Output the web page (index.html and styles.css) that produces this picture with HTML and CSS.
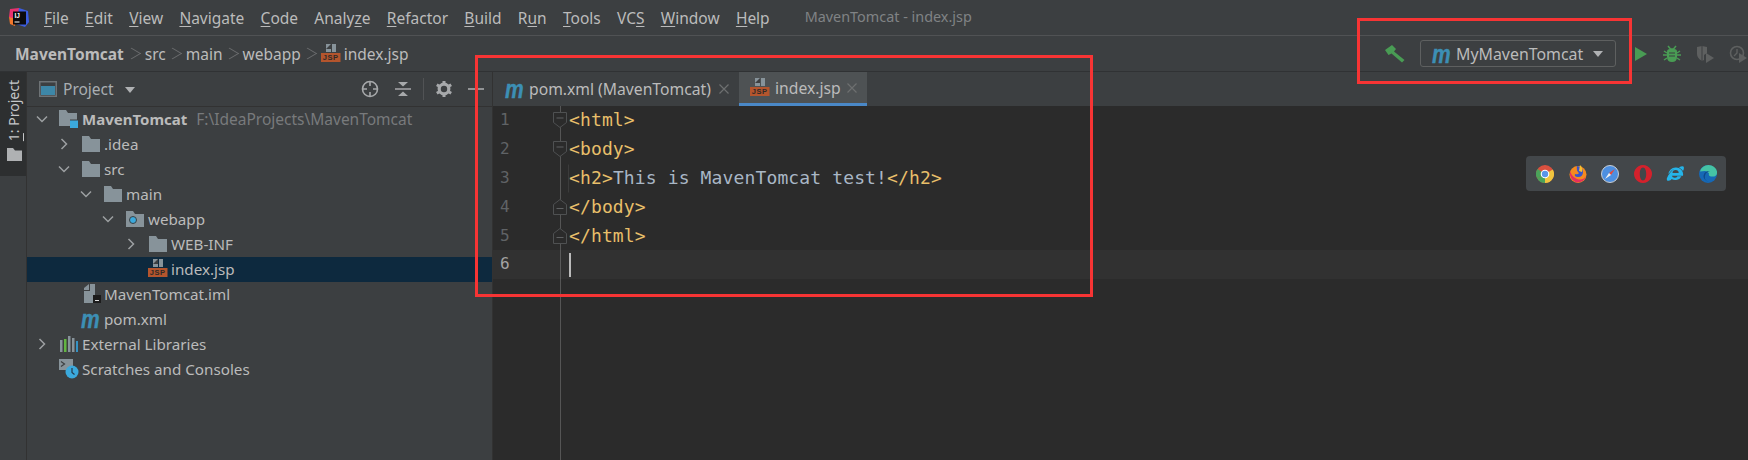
FILE: index.html
```html
<!DOCTYPE html>
<html lang="en">
<head>
<meta charset="utf-8">
<title>MavenTomcat - index.jsp</title>
<link rel="stylesheet" href="styles.css">
</head>
<body>
<svg class="defs" aria-hidden="true">
  <symbol id="folder" viewBox="0 0 20 18"><path d="M1 1h7l2 3h9v13H1z" fill="#87939a"/></symbol>
  <symbol id="chev-d" viewBox="0 0 16 16"><path d="M3 5.500l5 5 5-5" fill="none" stroke="#9da0a2" stroke-width="1.500"/></symbol>
  <symbol id="chev-r" viewBox="0 0 16 16"><path d="M5.500 3l5 5-5 5" fill="none" stroke="#9da0a2" stroke-width="1.500"/></symbol>
  <symbol id="jsp" viewBox="0 0 20 20">
    <path d="M5 0h5v8H5z M11 0h4v8h-4z" fill="#87939a"/><path d="M5 5l5-5v5z" fill="#3c3f41"/>
    <rect x="0" y="9" width="19.500" height="9" fill="#b4552d"/>
    <text x="9.700" y="16.300" text-anchor="middle" font-family="Liberation Sans, sans-serif" font-weight="700" font-size="7.500" letter-spacing=".6" fill="#2f2a28">JSP</text>
  </symbol>
  <symbol id="close" viewBox="0 0 12 12"><path d="M1.500 1.500l9 9m0-9l-9 9" stroke="#6d6f70" stroke-width="1.200" fill="none"/></symbol>
  <symbol id="minus-fold" viewBox="0 0 14 16"><path d="M.5.5h13v10l-6.500 5-6.500-5z" fill="#2b2b2b" stroke="#4f5152"/><path d="M3.500 6h7" stroke="#5f6163"/></symbol>
  <symbol id="end-fold" viewBox="0 0 14 16"><path d="M.5 15.500h13v-10l-6.500-5-6.500 5z" fill="#2b2b2b" stroke="#4f5152"/><path d="M3.500 9.500h7" stroke="#5f6163"/></symbol>
</svg>

<header class="titlebar">
  <svg class="logo" viewBox="0 0 20 20" aria-hidden="true">
    <path d="M1 1l9-1 2 4-9 8-3-3z" fill="#e8326f"/>
    <path d="M10 0l9 3 1 11-4 5-9-3z" fill="#3b5de0"/>
    <path d="M0 9l7 2-1 7-5-2z" fill="#f2772b"/>
    <rect x="4" y="3.500" width="13" height="13" fill="#0b0b0d"/>
    <text x="5.500" y="10" font-family="Liberation Sans, sans-serif" font-weight="700" font-size="6.500" fill="#fff">IJ</text>
    <rect x="5.500" y="13.500" width="5" height="1" fill="#fff"/>
  </svg>
  <nav class="menu">
    <span><u>F</u>ile</span><span><u>E</u>dit</span><span><u>V</u>iew</span><span><u>N</u>avigate</span><span><u>C</u>ode</span><span>Analy<u>z</u>e</span><span><u>R</u>efactor</span><span><u>B</u>uild</span><span>R<u>u</u>n</span><span><u>T</u>ools</span><span>VC<u>S</u></span><span><u>W</u>indow</span><span><u>H</u>elp</span>
  </nav>
  <span class="wintitle">MavenTomcat - index.jsp</span>
</header>

<div class="navbar">
  <div class="crumbs">
    <b>MavenTomcat</b><i class="sep"></i><span>src</span><i class="sep"></i><span>main</span><i class="sep"></i><span>webapp</span><i class="sep"></i>
    <svg class="ic jspcrumb"><use href="#jsp"/></svg><span>index.jsp</span>
  </div>
  <div class="runbar">
    <svg class="hammer" viewBox="0 0 20 18" aria-hidden="true"><path d="M0 5L7 0l4 4-2 2.500L19.500 15 17 17.500 6.500 8.500 3.500 10z" fill="#499c54"/></svg>
    <div class="runconfig"><span class="mvn">m</span><span class="runname">MyMavenTomcat</span><i class="caret"></i></div>
    <svg class="runic play" viewBox="0 0 14 16" aria-hidden="true"><path d="M1 1l12 7-12 7z" fill="#499c54"/></svg>
    <svg class="runic" viewBox="0 0 18 18" aria-hidden="true"><path d="M5 1l2.500 3h3L13 1M1 6l3 2M17 6l-3 2M0 10h4M14 10h4M1 15l3-2M17 15l-3-2" stroke="#499c54" stroke-width="1.500" fill="none"/><path d="M4 6.500Q4 4 7 4h4q3 0 3 2.500V12q0 5-5 5t-5-5z" fill="#499c54"/><path d="M6 8h6M6 11h6" stroke="#3c3f41" stroke-width="1.200"/></svg>
    <svg class="runic" viewBox="0 0 18 18" aria-hidden="true"><path d="M1 2l5-1 5 1v6l-3 2v5l-2 1q-5-3-5-7z" fill="#5e6060"/><path d="M6 1v15" stroke="#3c3f41"/><path d="M10 8l8 5-8 5z" fill="#5e6060"/></svg>
    <svg class="runic last" viewBox="0 0 18 18" aria-hidden="true"><circle cx="8" cy="8" r="6.500" fill="none" stroke="#5e6060" stroke-width="1.600"/><path d="M8 4v4l-3 3" stroke="#5e6060" stroke-width="1.400" fill="none"/><path d="M10 8l8 5-8 5z" fill="#5e6060"/></svg>
  </div>
</div>

<main class="main">
  <aside class="stripe">
    <div class="stripe-btn">
      <span class="stripe-label"><u>1</u>: Project</span>
      <svg class="stripe-folder" viewBox="0 0 15 13" aria-hidden="true"><path d="M0 0h6l2 2.500h7V13H0z" fill="#afb1b3"/></svg>
    </div>
  </aside>

  <section class="project">
    <div class="panel-head">
      <svg class="paneic" viewBox="0 0 18 16" aria-hidden="true"><rect x=".75" y=".75" width="16.500" height="14.500" fill="none" stroke="#6e7376" stroke-width="1.500"/><rect x="2" y="5" width="14" height="9" fill="#3d87a8"/></svg>
      <span class="panetitle">Project</span><i class="caret small"></i>
      <div class="pane-tools">
        <svg class="tool" viewBox="0 0 18 18" aria-hidden="true"><circle cx="9" cy="9" r="7.500" fill="none" stroke="#a7a9ab" stroke-width="1.600"/><path d="M9 1v5M9 12v5M1 9h5M12 9h5" stroke="#a7a9ab" stroke-width="1.600"/></svg>
        <svg class="tool" viewBox="0 0 18 18" aria-hidden="true"><path d="M1 9h16" stroke="#a7a9ab" stroke-width="1.500"/><path d="M4 2h10L9 6.500zM4 16h10L9 11.500z" fill="#a7a9ab"/></svg>
        <i class="toolsep"></i>
        <svg class="tool" viewBox="0 0 18 18" aria-hidden="true"><circle cx="9" cy="9" r="4.800" fill="none" stroke="#a7a9ab" stroke-width="3.200"/><path d="M9 1v3M9 14v3M1.800 4.800l2.600 1.500M13.600 11.700l2.600 1.500M1.800 13.200l2.600-1.500M13.600 6.300l2.600-1.500" stroke="#a7a9ab" stroke-width="3"/></svg>
        <svg class="tool" viewBox="0 0 18 18" aria-hidden="true"><path d="M1 9h16" stroke="#a7a9ab" stroke-width="1.600"/></svg>
      </div>
    </div>
    <div class="tree">
      <div class="row d0"><svg class="chev"><use href="#chev-d"/></svg>
        <svg class="ic" viewBox="0 0 20 18"><path d="M0 0h7l2 3h9v13H0z" fill="#87939a"/><rect x="11" y="10" width="8" height="8" fill="#3ba9dc"/><path d="M11 10h8" stroke="#3c3f41"/></svg>
        <b class="name">MavenTomcat</b><span class="hint">F:\IdeaProjects\MavenTomcat</span></div>
      <div class="row d1"><svg class="chev"><use href="#chev-r"/></svg><svg class="ic"><use href="#folder"/></svg><span>.idea</span></div>
      <div class="row d1"><svg class="chev"><use href="#chev-d"/></svg><svg class="ic"><use href="#folder"/></svg><span>src</span></div>
      <div class="row d2"><svg class="chev"><use href="#chev-d"/></svg><svg class="ic"><use href="#folder"/></svg><span>main</span></div>
      <div class="row d3"><svg class="chev"><use href="#chev-d"/></svg><svg class="ic" viewBox="0 0 20 18"><path d="M1 1h7l2 3h9v13H1z" fill="#87939a"/><circle cx="8" cy="10" r="3.500" fill="#3ba9dc" stroke="#3c3f41" stroke-width="1"/></svg><span>webapp</span></div>
      <div class="row d4"><svg class="chev"><use href="#chev-r"/></svg><svg class="ic"><use href="#folder"/></svg><span>WEB-INF</span></div>
      <div class="row d4 selected"><i class="chev"></i><svg class="ic"><use href="#jsp"/></svg><span>index.jsp</span></div>
      <div class="row d1"><i class="chev"></i><svg class="ic" viewBox="0 0 20 20"><path d="M3 4l5-4v6H3zM9 0h5v19H3V7h6z" fill="#87939a"/><rect x="12" y="11" width="8" height="8" fill="#1c1c1c"/><path d="M14 16.500h4" stroke="#ddd"/></svg><span>MavenTomcat.iml</span></div>
      <div class="row d1"><i class="chev"></i><span class="ic mvnbox"><span class="mvn">m</span></span><span>pom.xml</span></div>
      <div class="row d0"><svg class="chev"><use href="#chev-r"/></svg><svg class="ic" viewBox="0 0 20 18"><path d="M1 5h2.500v12H1z" fill="#87939a"/><path d="M5 4h2.500v13H5z" fill="#62b543"/><path d="M9 1h2.500v16H9z" fill="#87939a"/><path d="M13 3h2.500v14H13z" fill="#87939a"/><path d="M17 6h2v11h-2z" fill="#3592c4"/></svg><span>External Libraries</span></div>
      <div class="row d0"><i class="chev"></i><svg class="ic" viewBox="0 0 20 20"><path d="M0 0h14v11H0z" fill="#87939a"/><path d="M2 2.500L5.500 5 2 7.500" stroke="#3c3f41" fill="none" stroke-width="1.200"/><circle cx="13" cy="13" r="6.500" fill="#3ba9dc"/><path d="M13 9v4.500l2.500 2" stroke="#24384a" fill="none" stroke-width="1.200"/></svg><span>Scratches and Consoles</span></div>
    </div>
  </section>

  <section class="editor">
    <div class="tabs">
      <div class="tab"><span class="mvn">m</span><span class="tabname">pom.xml (MavenTomcat)</span><svg class="close"><use href="#close"/></svg></div>
      <div class="tab active"><svg class="ic"><use href="#jsp"/></svg><span class="tabname">index.jsp</span><svg class="close"><use href="#close"/></svg></div>
    </div>
    <div class="code">
      <div class="line"><span class="num">1</span><svg class="fold"><use href="#minus-fold"/></svg><code>&lt;html&gt;</code></div>
      <div class="line"><span class="num">2</span><svg class="fold"><use href="#minus-fold"/></svg><code>&lt;body&gt;</code></div>
      <div class="line"><span class="num">3</span><i class="fold"></i><code class="guide">&lt;h2&gt;<span class="txt">This is MavenTomcat test!</span>&lt;/h2&gt;</code></div>
      <div class="line"><span class="num">4</span><svg class="fold"><use href="#end-fold"/></svg><code>&lt;/body&gt;</code></div>
      <div class="line"><span class="num">5</span><svg class="fold"><use href="#end-fold"/></svg><code>&lt;/html&gt;</code></div>
      <div class="line current"><span class="num">6</span><i class="fold"></i><i class="cursor"></i></div>
    </div>
    <div class="browsers">
      <svg class="br" viewBox="0 0 18 18" aria-hidden="true"><circle cx="9" cy="9" r="9" fill="#d9503f"/><path d="M9 9L1.200 13.500A9 9 0 0 1 1.500 4z" fill="#4aa35a"/><path d="M9 9l7.800-4.500A9 9 0 0 1 9 18z" fill="#f0c53f"/><path d="M9 9L9 18A9 9 0 0 1 1.200 13.500z" fill="#4aa35a"/><circle cx="9" cy="9" r="4.300" fill="#fff"/><circle cx="9" cy="9" r="3.200" fill="#5a95e8"/></svg>
      <svg class="br" viewBox="0 0 18 18" aria-hidden="true"><circle cx="9" cy="9.500" r="8.500" fill="#f58a1f"/><path d="M1 6Q0 14 7 17.500 15 18 17 11 14 16 8 14 3 12 1 6z" fill="#e5305c"/><path d="M8 1q6 1 6 6 0 5-5 5-4 0-3-3 3 1 4-1-3-2-2-7z" fill="#3a55c8"/><path d="M11 0q3 3 2 7l-3-1z" fill="#f8c12f"/></svg>
      <svg class="br" viewBox="0 0 18 18" aria-hidden="true"><circle cx="9" cy="9" r="8.500" fill="#4d8fe0" stroke="#c9ced4" stroke-width="1"/><path d="M14 4L8 8l2 2z" fill="#e34b3d"/><path d="M4 14l4-6 2 2z" fill="#f2f2f2"/></svg>
      <svg class="br" viewBox="0 0 18 18" aria-hidden="true"><path d="M9 0a9 9 0 1 0 .01 0zM9 2.500c-2 0-3.200 2.900-3.200 6.500s1.200 6.500 3.200 6.500 3.200-2.900 3.200-6.500S11 2.500 9 2.500z" fill="#d4212c" fill-rule="evenodd"/></svg>
      <svg class="br" viewBox="0 0 18 18" aria-hidden="true"><path d="M9.500 2.500a7 7 0 0 0-7 6.800c1.500-2.600 4-4.800 6-5.800-2.800 2-6.200 6-7.500 9.500-.7 2.300.5 3.800 4 2l.5-1a7 7 0 0 0 10-2.800h-4a3.200 3.200 0 0 1-5.700-.5H17a7 7 0 0 0-7.500-8.200zM6.500 8a3 3 0 0 1 6.200 0z" fill="#25b5ea" fill-rule="evenodd"/><path d="M13 2.500q3-2 4.500-1 1 1.500-.5 4.500-1-2-4-3.500z" fill="#25b5ea"/></svg>
      <svg class="br" viewBox="0 0 18 18" aria-hidden="true"><circle cx="9" cy="9" r="9" fill="#1668b5"/><path d="M1 6.500Q3 0 9.500 0 16 0 18 6.500q.5 5-4.500 5-4.500 0-3.500-3Q9 6 6 6 3 6 1 6.500z" fill="#45c3a5"/><path d="M6 14q-1-7 5-8-6 0-6.500 5Q4.500 15 10 17q-3-1-4-3z" fill="#0e4a8a"/></svg>
    </div>
  </section>
</main>

<div class="redbox box-editor"></div>
<div class="redbox box-run"></div>
</body>
</html>
```
FILE: styles.css
```css
* { box-sizing: border-box; }
html, body { margin: 0; padding: 0; }
body {
  width: 1748px; height: 460px; overflow: hidden; position: relative;
  display: flex; flex-direction: column;
  background: #3c3f41; color: #bbbbbb;
  font-family: "Noto Sans", "Open Sans", sans-serif; font-size: 15.500px;
}
.defs { display: none; }
i { display: block; font-style: normal; }
u { text-underline-offset: 2px; text-decoration-thickness: 1px; }

.titlebar {
  height: 36px; flex: none; display: flex; align-items: center;
  padding-left: 9px; border-bottom: 1px solid #505254;
}
.logo { width: 20px; height: 20px; flex: none; margin-right: 15px; }
.menu { display: flex; gap: 16.300px; }
.wintitle { margin: 0 0 3px 35px; color: #808385; font-size: 14.400px; }

.navbar {
  height: 36px; flex: none; display: flex; align-items: center;
  padding-left: 15px; border-bottom: 1px solid #303234;
}
.crumbs { display: flex; align-items: center; }
.crumbs b { font-weight: 700; margin-right: 1px; }
.sep {
  width: 11px; height: 11px; margin: 0 8px 0 1px; transform: rotate(45deg) skew(-14deg, -14deg);
  border-top: 1px solid #6a6c6e; border-right: 1px solid #6a6c6e;
}
.jspcrumb { margin-right: 3px; }
.runbar { margin-left: auto; display: flex; align-items: center; height: 100%; padding-right: 1px; }
.hammer { width: 20px; height: 18px; margin-right: 15px; }
.runconfig {
  width: 196px; height: 27px; display: flex; align-items: center; padding-left: 11px;
  border: 1px solid #5e6060; border-radius: 3px; margin-right: 18px;
}
.runname { margin-left: 6px; font-size: 15.900px; }
.runconfig .caret { margin-left: 10px; }
.caret { width: 0; height: 0; border-left: 5.500px solid transparent; border-right: 5.500px solid transparent; border-top: 6px solid #afb1b3; }
.caret.small { margin-left: 11px; margin-top: 1px; }
.runic { width: 18px; height: 18px; margin-right: 15px; flex: none; }
.runic.play { width: 14px; height: 16px; }
.runic.last { margin-right: 0; }

.mvn {
  display: inline-block; width: 18px; flex: none; color: #3c8fb5;
  font: italic 700 25px/18px "Liberation Sans", sans-serif;
  transform: scaleX(.84); transform-origin: left center;
  -webkit-text-stroke: .4px #3c8fb5;
}

.main { flex: 1; display: flex; min-height: 0; }
.stripe { width: 27px; flex: none; border-right: 1px solid #323232; }
.stripe-btn { height: 104px; background: #2d2f30; display: flex; flex-direction: column; align-items: center; padding: 8px 0 0 2px; }
.stripe-label { writing-mode: vertical-rl; transform: rotate(180deg); font-size: 14px; line-height: 16px; color: #c4c6c8; }
.stripe-folder { width: 15px; height: 13px; margin-top: 7px; }

.project { width: 466px; flex: none; border-right: 1px solid #323232; }
.panel-head {
  height: 35px; display: flex; align-items: center; padding-left: 12px;
  border-bottom: 1px solid #323232;
}
.paneic { width: 18px; height: 16px; margin-right: 6px; }
.panetitle { color: #a9aeb2; }
.pane-tools { margin-left: auto; display: flex; align-items: center; padding-right: 7px; }
.tool { width: 18px; height: 18px; margin-left: 15px; }
.tool:first-child { margin-left: 0; }
.toolsep { width: 1px; height: 22px; background: #515355; margin-left: 11px; }
.toolsep + .tool { margin-left: 11px; }
.tool:last-child { margin-left: 14px; }

.tree { display: flex; flex-direction: column; font-size: 15.200px; }
.row { height: 25px; display: flex; align-items: center; white-space: nowrap; padding-bottom: 2px; }
.d0 { padding-left: 7px; }
.d1 { padding-left: 29px; }
.d2 { padding-left: 51px; }
.d3 { padding-left: 73px; }
.d4 { padding-left: 96px; }
.selected { background: #0d293e; }
.chev { width: 16px; height: 16px; margin-right: 9px; flex: none; }
.ic { width: 20px; height: 20px; margin-right: 3px; flex: none; }
.mvnbox { display: flex; align-items: center; }
.name { font-weight: 700; font-size: 15px; }
.hint { margin-left: 9px; color: #787a7c; font-size: 15.500px; }

.editor { flex: 1; position: relative; background: #2b2b2b; min-width: 0; display: flex; flex-direction: column; }
.tabs { height: 34px; flex: none; background: #3c3f41; display: flex; font-size: 15.700px; }
.tab { display: flex; align-items: center; padding-left: 12px; width: 246px; }
.tab.active { width: 128px; padding-left: 11px; background: #4e5254; border-bottom: 3px solid #4a88c7; }
.tab .mvn { margin-right: 6px; }
.tab .ic { margin-right: 5px; }
.tabname { flex: 1; }
.tab .close { width: 12px; height: 12px; margin-right: 9px; flex: none; }

.code {
  flex: 1;
  font: 18px/28.900px "DejaVu Sans Mono", monospace; color: #e8bf6a; letter-spacing: .13px;
  background: linear-gradient(#555555, #555555) 67px 0 / 1px 100% no-repeat;
}
.line { height: 28.900px; display: flex; align-items: center; }
.line.current { background-color: rgba(255, 255, 255, .03); }
.num { width: 60px; padding-left: 7px; font-size: 16px; color: #606366; flex: none; }
.current .num { color: #a4a3a3; }
.fold { width: 14px; height: 16px; flex: none; margin-right: 2px; }
code { font: inherit; white-space: pre; }
.guide { box-shadow: -1.500px 0 0 -0.500px #3b3b3b; }
.txt { color: #a9b7c6; }
.cursor { width: 2px; height: 24px; background: #bbbbbb; }

.browsers {
  position: absolute; left: 1033px; top: 84px; width: 200px; height: 35px;
  background: #43474a; border-radius: 4px; display: flex; align-items: center;
  padding-left: 10px; gap: 14.500px;
}
.br { width: 18px; height: 18px; flex: none; }

.redbox { position: absolute; border: 3px solid #f73434; pointer-events: none; }
.box-editor { left: 475px; top: 55px; width: 618px; height: 242px; }
.box-run { left: 1357px; top: 18px; width: 275px; height: 66px; }
```
